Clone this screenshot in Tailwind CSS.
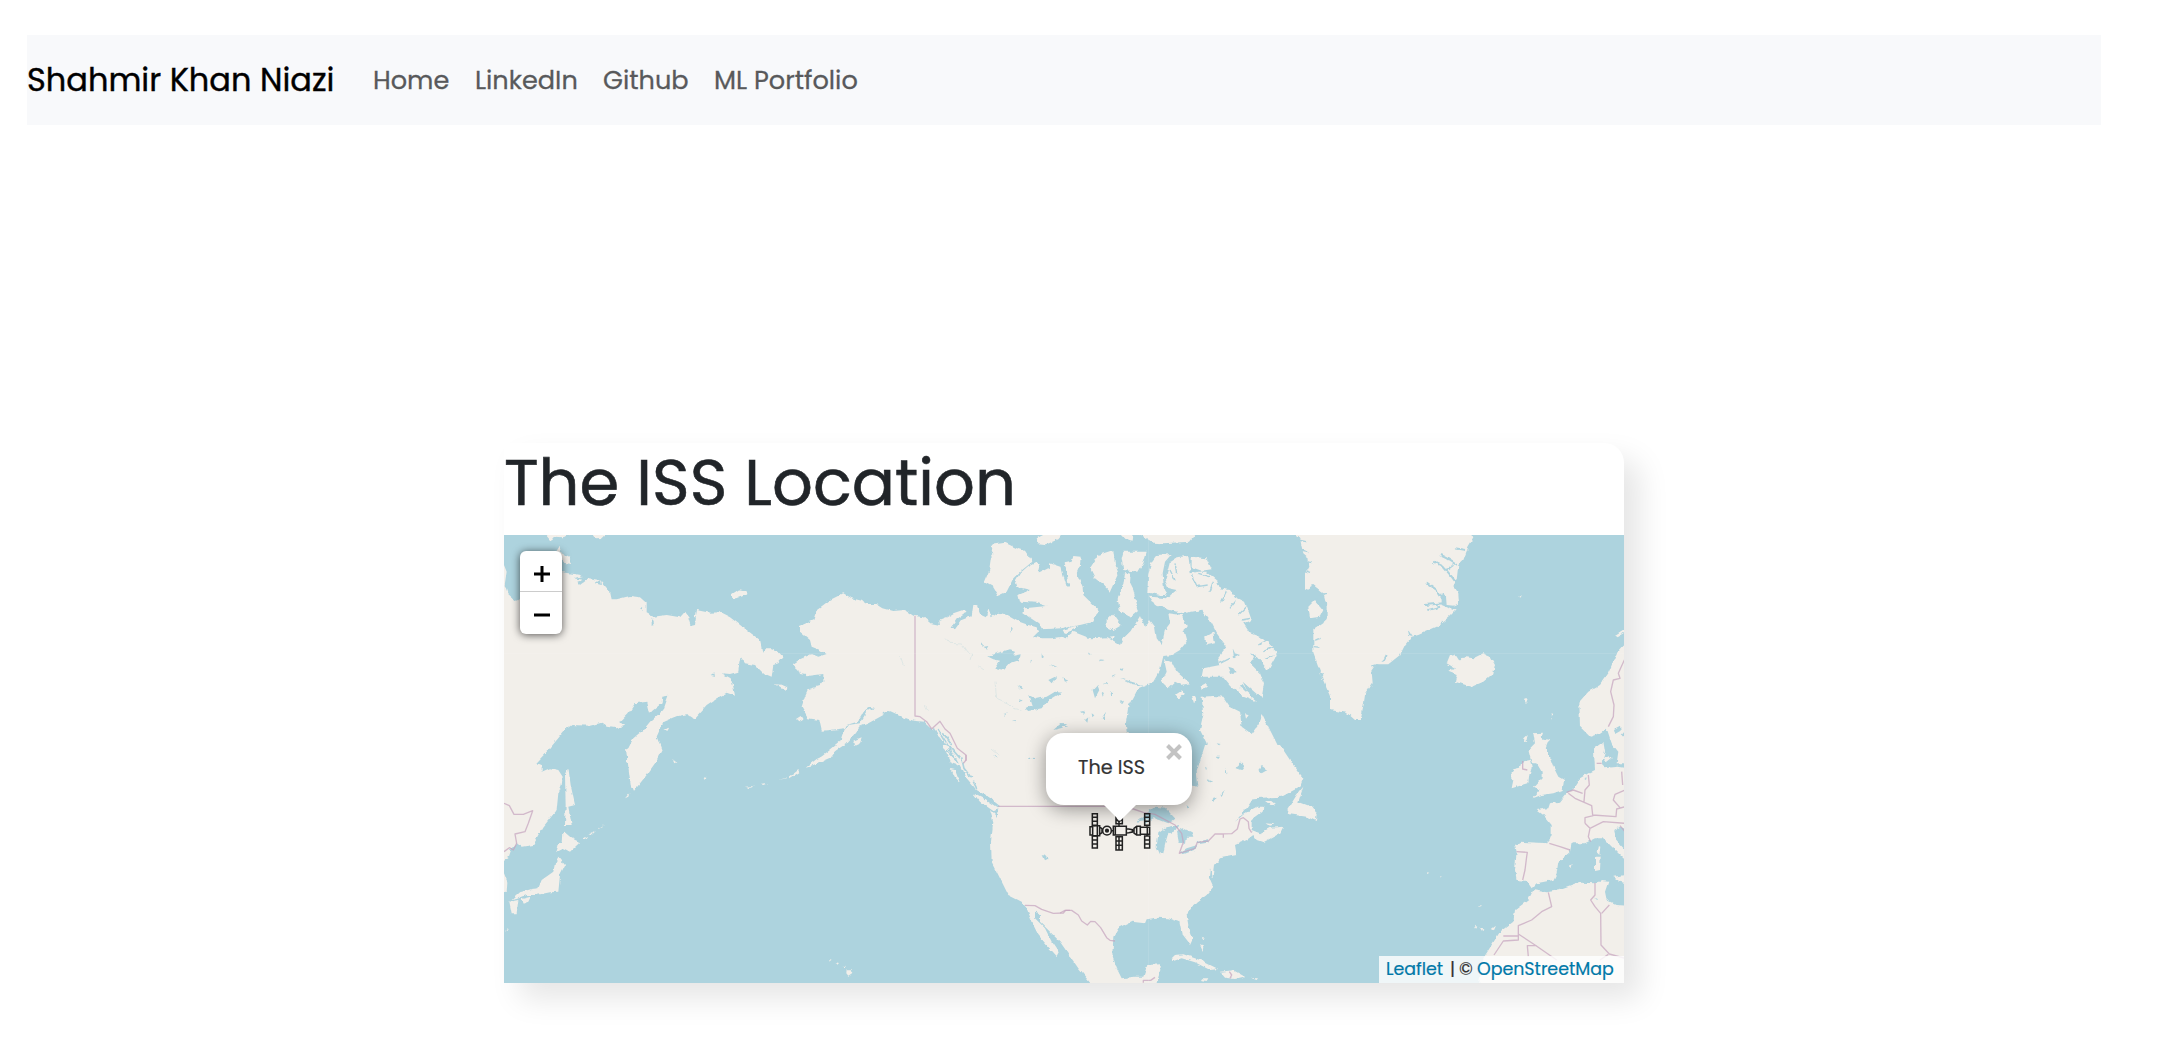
<!DOCTYPE html>
<html lang="en">
<head>
<meta charset="utf-8">
<title>The ISS Location</title>
<script src="https://cdn.jsdelivr.net/npm/@tailwindcss/browser@4"></script>
</head>
<body class="bg-white font-[Poppins,Inter,sans-serif] text-[#212529] pt-[35px] h-[1042px] overflow-hidden">
<nav class="ml-[27px] w-[2074px] h-[90px] bg-[#f8f9fb] flex items-center">
  <a class="w-[346px] text-[32px] leading-none text-black whitespace-nowrap [-webkit-text-stroke:0.4px]">Shahmir Khan Niazi</a>
  <ul class="flex items-center pt-[2px] text-[25.6px] leading-none text-[#58595b] whitespace-nowrap [-webkit-text-stroke:0.3px]">
    <li class="w-[102px]">Home</li>
    <li class="w-[128px]">LinkedIn</li>
    <li class="w-[111px]">Github</li>
    <li>ML Portfolio</li>
  </ul>
</nav>
<main class="mt-[318px] ml-[504px] w-[1120px] h-[540px] rounded-tr-[20px] shadow-[16px_16px_30px_rgba(0,0,0,0.1)]">
  <h1 class="h-[92px] pt-[2px] text-[64px] leading-[76px] whitespace-nowrap [-webkit-text-stroke:0.6px]">The ISS Location</h1>
  <section class="relative w-[1120px] h-[448px] overflow-hidden bg-[#add3de]">
    <svg class="block" width="1120" height="448" viewBox="504 535 1120 448">
      <defs>
        <filter id="coast" x="0" y="0" width="1" height="1" color-interpolation-filters="sRGB"><feTurbulence type="fractalNoise" baseFrequency=".17" numOctaves="2" seed="4" result="n"/><feDisplacementMap in="SourceGraphic" in2="n" scale="4" xChannelSelector="R" yChannelSelector="G"/><feGaussianBlur stdDeviation=".6"/></filter>
      </defs>
      <g filter="url(#coast)">
      <rect x="484" y="515" width="1160" height="488" fill="#add3de"/>
      <g fill="#f2efea">
        <!-- Siberia, Chukotka -->
        <g transform="translate(500 530) scale(.33333)">
          <path d="M-30 100L12 105 20 125 14 165 22 190 35 202 50 212 60 205 62 120 190 127 240 135 262 150 270 145 300 150 330 185 335 208 350 208 390 198 420 202 440 220 440 250 460 260 500 255 540 262 555 245 568 262 580 285 588 240 630 248 660 247 690 262 740 300 780 330 788 372 795 355 815 355 835 365 850 382 835 400 820 405 815 440 790 430 765 405 735 400 722 380 718 400 715 425 690 432 665 430 692 445 700 470 705 497 680 488 650 505 620 525 582 567 560 553 525 560 490 575 470 620 485 660 465 700 380 700 385 655 400 625 430 600 450 575 490 540 505 497 487 500 485 520 450 548 442 515 405 520 385 550 360 575 372 587 350 595 320 590 305 578 270 587 215 585 195 600 150 655 108 700 -30 700Z"/>
          <path d="M695 193L718 178 738 182 746 192 715 203 698 206ZM140 15L158 0 210 15 185 22 165 20 155 32ZM275 10L320 10 305 24 285 25ZM165 70L178 50 185 70 210 85 215 102 190 98ZM824 463L845 465 863 476 845 476ZM490 600L505 592 500 602Z"/>
        </g>
        <!-- Alaska, Yukon, Arctic coast -->
        <g transform="translate(780 530) scale(.33333)">
          <path d="M190 190L215 205 245 212 260 222 290 222 310 235 340 243 375 240 400 257 430 262 455 283 480 288 478 270 500 262 520 250 555 238 562 245 530 268 515 290 525 298 545 270 575 258 580 225 590 225 603 255 618 262 625 235 635 262 655 248 680 255 710 272 745 285 770 292 775 305 760 320 790 325 815 325 845 320 870 335 900 335 900 720 545 720 530 690 500 650 480 620 455 598 430 575 400 572 370 562 330 543 310 555 265 580 240 590 225 610 200 640 170 660 130 690 105 695 150 660 180 635 190 605 205 585 240 580 262 542 285 535 275 530 250 545 232 575 200 585 195 595 150 600 125 602 118 570 85 565 65 530 75 500 85 478 120 468 130 455 130 432 90 437 60 432 55 418 38 403 60 388 95 372 115 380 140 372 120 360 95 350 90 330 60 305 60 288 100 270 110 240 150 210Z"/>
          <path d="M630 45L675 38 710 55 735 62 757 95 720 125 700 145 680 185 655 197 640 172 613 157 628 120 633 85 640 75ZM770 95L780 110 775 130 805 115 835 130 830 112 845 120 860 170 905 165 905 270 845 295 785 298 775 280 730 250 735 235 800 228 770 218 720 215 715 195 750 180 710 170 705 155 720 130 745 108ZM770 25L800 10 850 10 835 28 800 43 775 40ZM220 635L245 625 240 640 222 648ZM48 567L62 558 68 568 55 574ZM-5 372L10 382 0 392ZM0 462L22 472 18 480ZM855 100L890 110 890 170 865 160Z"/>
        </g>
        <!-- Canadian Arctic, Baffin, Quebec, west Greenland -->
        <g transform="translate(1060 530) scale(.33333)">
          <path d="M-30 335L15 325 40 305 90 325 140 322 180 345 190 325 215 300 240 258 255 295 270 270 285 290 290 325 305 345 315 300 330 280 325 250 365 255 380 290 370 300 380 335 360 360 335 375 310 378 300 420 280 455 235 475 205 530 197 580 200 605 215 610 230 720 -30 720Z"/>
          <path d="M305 455L320 425 312 388 335 395 350 425 390 460 365 465 345 455 325 475ZM345 495L365 482 375 488 355 507ZM396 500L408 500 402 520ZM422 468L440 458 440 470 425 480Z"/>
          <path d="M425 500L460 498 490 500 510 530 540 545 545 590 575 612 595 585 608 555 630 600 650 640 675 695 690 720 430 720 440 640 420 600 430 555Z"/>
          <path d="M290 75L335 72 315 95 308 130 312 180 322 195 300 195 262 187 265 130 275 95ZM330 95L350 82 385 78 392 130 415 125 440 125 470 150 480 175 510 180 525 200 555 215 575 270 550 280 570 310 610 325 652 365 645 385 625 420 585 385 570 400 600 430 612 460 605 500 560 480 548 462 540 470 595 517 550 500 510 465 490 440 450 440 425 440 430 415 480 405 475 380 500 350 470 310 455 280 425 240 370 250 330 240 285 225 270 200 320 205 350 180 325 175 315 150 325 115ZM395 80L440 85 455 118 425 122 395 112Z"/>
          <path d="M190 65L260 65 250 100 235 125 190 120 185 85ZM180 180L190 165 195 130 212 130 210 160 220 180 235 240 210 260 180 245 173 210ZM90 115L115 75 160 60 165 100 175 130 150 185 130 165 105 145ZM-30 100L5 112 14 170 28 170 22 130 14 100 35 95 40 78 62 80 60 105 50 130 68 170 70 195 115 240 100 275 60 285 30 290 0 275 -30 290ZM140 270L160 250 185 285 160 300 140 290ZM435 320L460 305 465 340 440 345ZM175 10L218 10 215 32 195 25ZM235 10L410 10 390 35 310 40 280 38ZM8 300L45 288 45 298 15 312ZM148 320L165 318 160 332ZM555 552L566 556 558 566ZM480 315L487 325 477 325Z"/>
          <path d="M708 0L708 15 720 25 725 50 730 70 742 80 745 110 735 130 735 180 760 165 790 190 800 230 800 260 790 280 760 300 760 370 785 440 815 510 840 545 870 545 900 555 900 0ZM745 230L765 210 790 240 780 260 750 265Z"/>
        </g>
        <!-- East Greenland, Iceland, Scandinavia -->
        <g transform="translate(1340 530) scale(.33333)">
          <path d="M-30 0L385 0 400 25 385 50 370 90 355 105 350 150 340 165 355 190 357 220 325 235 350 238 330 258 290 290 235 315 215 320 195 345 180 375 145 403 110 403 95 425 98 460 75 495 70 530 62 570 45 570 20 548 -30 540Z"/>
          <path d="M320 400L330 375 345 372 360 395 365 385 380 382 400 385 430 370 450 378 465 405 460 430 430 455 395 470 345 455 350 435 325 425 345 415ZM900 320L853 345 830 370 805 430 780 465 745 485 718 515 720 590 750 620 775 612 800 595 815 640 835 665 830 700 900 700ZM763 655L790 635 795 665 785 700 765 700ZM580 610L610 608 605 625 627 630 615 660 632 700 575 700 565 660 585 640ZM553 625L563 615 560 632 552 640ZM552 508L564 503 558 520ZM632 552L638 550 634 570ZM535 200L543 196 538 203ZM825 318L853 300 853 308 830 322Z"/>
        </g>
        <!-- Russian Far East, Korea, Japan, Kurils -->
        <g transform="translate(500 755) scale(.33333)">
          <path d="M-30 -30L140 -30 125 0 105 22 125 30 125 50 150 40 175 45 188 65 185 90 175 115 170 165 130 215 100 270 65 275 50 265 35 280 25 310 0 325 -30 325ZM-30 345L12 355 22 380 20 410 -30 415ZM195 60L205 38 212 90 225 150 205 155 215 210 195 210 197 150ZM378 -20L475 -20 465 25 440 60 400 110 392 90ZM190 228L215 250 240 262 210 290 190 280 165 292 170 275 188 262ZM175 305L195 330 180 360 175 410 150 412 110 420 80 420 50 432 35 435 60 412 95 402 115 400 125 375 160 350 165 325ZM28 440L55 435 50 475 35 475ZM65 432L92 425 85 440 68 446ZM375 130L388 115 385 125ZM245 252L262 242 255 252ZM265 240L285 230 275 240ZM290 222L312 210 300 220ZM520 12L532 22 526 25ZM735 95L765 93 750 99ZM780 86L805 84 790 90ZM612 66L622 70 618 76ZM12 530L25 518 20 527ZM835 75L880 62 860 70Z"/>
        </g>
        <!-- West coast of North America, Aleutians, Hawaii -->
        <g transform="translate(780 755) scale(.33333)">
          <path d="M488 -30L515 25 545 35 560 70 590 105 640 135 655 160 650 185 630 165 640 200 633 260 635 320 660 370 685 420 725 440 740 460 760 510 775 540 800 570 830 603 836 592 815 560 795 520 765 490 765 470 785 480 800 510 830 545 870 590 900 620 900 -30ZM580 115L610 130 655 160 640 168 600 140ZM512 42L525 45 540 85 525 70ZM25 68L55 45 58 52 30 70ZM80 35L110 12 125 5 165 -12 150 8 100 30ZM200 643L212 643 217 654 205 662 199 655ZM187 632L201 633 195 639ZM167 622L177 624 172 629ZM147 612L155 614 150 618Z"/>
        </g>
        <!-- Eastern North America, Caribbean -->
        <g transform="translate(1060 755) scale(.33333)">
          <path d="M-60 -30L660 -30 700 30 730 70 720 95 665 125 580 130 560 160 525 200 555 175 590 155 610 155 608 170 575 195 575 225 600 235 630 218 670 215 660 235 610 262 590 255 580 240 560 255 525 270 530 300 480 310 465 330 460 370 450 340 447 365 460 395 440 420 400 450 380 480 385 510 398 550 390 567 365 535 358 500 325 490 290 488 260 493 255 505 215 500 175 520 160 545 157 600 170 640 185 670 225 665 250 665 262 630 303 628 300 650 285 700 120 720 55 640 0 560 -60 500Z"/>
          <path d="M730 95L715 140 755 155 770 175 768 198 740 185 690 178 682 165 710 120ZM615 138L630 138 645 150 632 150ZM335 610L345 600 370 598 420 615 475 642 450 645 405 622 365 610 340 618ZM480 650L520 646 555 665 525 672 495 668ZM422 670L445 670 440 678 425 676ZM573 669L594 670 590 675ZM420 570L430 575 428 588ZM425 545L438 550 430 552ZM620 205L645 208 630 212Z"/>
        </g>
        <!-- Europe, North Africa -->
        <g transform="translate(1340 755) scale(.33333)">
          <path d="M572 -20L620 -20 640 35 655 65 672 75 668 105 640 115 605 120 578 130 600 105 582 95 605 70 605 50 590 25ZM545 20L570 15 575 35 568 60 565 85 515 100 520 75 512 65 520 40 540 35ZM762 -20L785 -20 785 25 790 40 835 35 900 45 900 240 840 215 820 228 825 250 855 285 880 330 850 310 820 280 790 250 765 250 735 265 695 265 690 290 655 320 650 355 640 375 590 385 575 400 560 378 530 375 525 345 530 290 525 270 540 260 625 265 635 240 635 210 610 180 590 165 625 160 630 145 660 140 680 115 700 100 720 70 745 55 765 45ZM900 455L830 450 800 435 795 410 805 380 785 378 765 385 720 383 660 405 620 412 580 405 565 435 525 465 520 500 480 530 455 570 430 610 415 700 900 700ZM820 365L900 355 900 395 840 380ZM765 305L782 305 780 345 765 348ZM774 272L781 275 778 300 770 292ZM685 332L698 328 694 340ZM790 8L808 0 815 10 800 22ZM420 518L430 520 426 528ZM455 522L468 512 462 526ZM405 512L412 515 408 522ZM415 450L427 452 418 455ZM260 352L268 353 262 357ZM298 364L308 366 300 367Z"/>
        </g>
      </g>
      <!-- Lakes and inlets -->
      <g fill="#add3de" stroke="none">
        <g transform="translate(500 530) scale(.33333)"><path d="M222 145L245 138 262 148 240 165 232 155 248 150ZM285 160L300 150 303 165ZM420 238L430 232 428 242ZM565 265L588 262 585 285 572 288ZM455 262L462 280 455 290ZM632 435L640 430 642 438Z"/></g>
        <g transform="translate(780 530) scale(.33333)"><path d="M625 380L650 370 690 358 705 362 700 374 722 370 718 390 690 400 672 420 645 415 660 392 640 388ZM745 495L770 507 800 500 825 485 845 488 800 515 785 535 745 543 735 535 755 525ZM712 468L730 475 722 478ZM820 600L840 583 862 582 845 594ZM605 335L612 345 608 352ZM612 350L625 348 618 360ZM693 290L698 295 694 310ZM785 370L792 378 785 383ZM810 402L830 412 820 410ZM805 450L830 438 815 460ZM850 445L865 452 855 455ZM670 552L680 550 674 557ZM700 572L710 570 706 577ZM718 508L728 510 722 515ZM748 395L755 392 750 400ZM310 545L325 543 330 555 318 558Z"/></g>
        <g transform="translate(1060 530) scale(.33333)"><path d="M98 480L112 465 118 480 105 505ZM128 462L140 458 145 466ZM150 488L160 485 155 498ZM125 488L132 492 128 500ZM182 515L192 512 188 522ZM60 545L74 542 70 552ZM75 570L85 562 82 578ZM95 550L103 556 97 562ZM125 565L138 545 132 570ZM155 440L168 435 160 442ZM180 418L190 415 188 422ZM180 445L215 455 255 468 215 462ZM118 388L135 390 125 393ZM85 365L95 373 90 374ZM0 582L25 590 5 592ZM505 410L520 415 530 430 515 432ZM518 355L525 370 540 375 522 385ZM570 370L585 375 620 415 605 412ZM548 455L600 500 602 508 565 490ZM765 205L798 215 798 235 780 222ZM782 430L792 432 785 445ZM470 640L482 642 476 646ZM405 655L412 660 408 680Z"/></g>
        <g transform="translate(1340 530) scale(.33333)"><path d="M305 190L318 200 320 225 350 228 340 240 305 225ZM822 600L840 590 842 602 825 612ZM845 615L853 605 853 625ZM805 655L820 660 815 680ZM203 295L218 318 208 316Z"/></g>
        <g transform="translate(780 755) scale(.33333)"><path d="M788 300L795 302 803 312 795 316ZM745 8L765 9 765 12 745 12ZM640 0L650 8 645 8Z"/></g>
        <g transform="translate(1060 755) scale(.33333)"><path d="M230 200L265 170 285 155 315 158 345 190 325 205 300 195 280 190 255 207 262 195ZM300 298L290 275 295 235 320 217 355 210 345 228 325 237 315 270 310 295ZM350 225L370 220 395 232 400 245 378 245 375 270 357 262ZM355 295L380 280 412 270 405 285 370 298ZM410 262L445 252 450 262 415 268ZM478 120L495 105 485 122ZM455 132L470 128 462 142ZM530 40L540 22 552 35 545 45ZM595 45L605 32 622 45 605 55ZM495 48L500 40 502 60ZM440 72L460 80 450 82ZM380 150L388 158 382 160ZM345 -30L435 -30 410 50 415 95 390 90ZM465 5L480 5 475 12ZM435 35L445 42 438 45Z"/></g>
        <g transform="translate(1340 755) scale(.33333)"><path d="M733 75L740 70 738 78ZM762 432L772 430 770 434Z"/></g>
      </g>
      <!-- Fjords and rivers -->
      <g fill="none" stroke="#add3de" stroke-width="1.5">
        <path transform="translate(1340 530) scale(.33333)" stroke-width="6" d="M260 158L290 180 310 210M255 225L310 220M262 240L300 230M280 95L310 110 335 140 350 160M300 75L320 85 350 105M345 55L375 60M320 120L340 105M130 395L140 375M95 410L112 405"/>
        <path transform="translate(1060 530) scale(.33333)" stroke-width="4" d="M715 30L738 35M722 60L745 65M730 95L755 98M735 125L750 130M760 170L775 180M775 195L798 190M765 330L785 325M762 350L780 352M345 100L350 130M395 135L410 170 440 165M500 185L485 215M530 210L510 235M560 230L535 255M570 265L545 270M620 330L595 345M640 350L610 365M640 375L615 385M415 130L450 140M330 120L345 150M460 155L450 185M480 400L510 385"/>
        <path transform="translate(780 530) scale(.33333)" stroke-width="5" d="M460 595L475 630 495 665M475 600L500 640 520 680M490 610L515 645M500 660L530 690M510 650L540 685"/>
        <path transform="translate(780 755) scale(.33333)" stroke-width="5" d="M520 0L535 25M545 10L552 40 575 70M590 100L580 80M620 125L658 155"/>
        <path transform="translate(780 530) scale(.33333)" stroke="#d5e2e3" stroke-width="2" d="M495 322L510 340 545 342 560 365 575 375 570 390M645 455L650 505 685 520 700 535 725 540M595 408L612 420M435 525L442 540M630 655L655 675M360 378L370 408"/>
      </g>
      </g>
      <!-- Borders -->
      <g fill="none" stroke="#c4a3bd" stroke-opacity=".7" stroke-width="4" stroke-linejoin="round">
        <path transform="translate(780 530) scale(.33333)" d="M405 257L405 558 420 560 440 575 455 597 480 574 495 597 510 610 532 655 558 675 558 692"/>
        <path transform="translate(780 755) scale(.33333)" d="M558 0L558 15 550 25M655 154L840 154M735 451L765 452 785 463 820 475 850 474 857 466 870 466"/>
        <path transform="translate(1060 755) scale(.33333)" d="M0 154L180 154 220 162 250 172 285 178 345 210 365 235 370 262 358 295 405 280 412 262 445 258 465 237 515 236 532 222 540 192 550 188 565 200 567 220 575 233M0 474L15 466 35 466 55 480 65 498 82 510 92 499 105 500 122 518 140 548 150 556 165 558M250 683L250 676 272 676 285 667M508 650L515 660 510 670M490 236L490 248"/>
        <path transform="translate(500 755) scale(.33333)" d="M12 145L28 152 42 178 70 178 98 167 85 205 75 230 45 237 50 265 40 285 28 278 12 290"/>
        <path transform="translate(1340 530) scale(.33333)" d="M853 390L835 430 840 445 820 450 812 485 822 525 820 560 805 590"/>
        <path transform="translate(1340 755) scale(.33333)" d="M548 18L548 42 562 45M745 60L748 90 735 105 732 140M680 112L700 105 728 115M685 115L705 130 755 152 758 180 828 185 830 162 855 155M735 205L735 188 760 182M735 205L750 220 790 200 855 205M750 220L745 245 752 260M628 265L660 275 690 285M530 290L562 292 560 305 555 345 548 375M855 105L825 118 820 135 840 158M770 25L785 25M845 50L848 90M625 412L635 455 605 470 575 495 535 512 535 555 490 558 462 600M535 537L585 570 650 615M490 543L535 543M565 605L562 572 590 572M765 383L765 420 752 435 765 455 782 475 783 570 808 597 855 610M785 475L808 450M780 615L805 598M855 230L840 212"/>
      </g>
      <g fill="none" stroke="#fff" stroke-opacity=".1"><path d="M504 653.500H1624M1148.500 535V983"/></g>
      <!-- Space station marker -->
      <g transform="translate(1030 720) scale(.33333)" fill="none" stroke="#222" stroke-width="4.600">
        <path d="M187 281H202V316H187ZM187 348H202V384H187ZM344 281H359V316H344ZM344 348H359V384H344ZM258 350H277V390H258ZM258 288V311H277V288M258 296L267 306 277 296M187 292H202M187 304H202M187 360H202M187 372H202M344 292H359M344 304H359M344 360H359M344 372H359M258 363H277M258 376H277M267 350V390M267 306V319M194 316V319M194 345V348M351 316V320M351 344V348"/>
        <path d="M180 320H188V345H180ZM188 317H209V347H188ZM209 321L216 326V338L209 343M202 318V346M250 319H289V345H250ZM256 319V345M289 326L296 327 307 329V336L296 338 289 339M244 332H250M307 332H312M312 325L320 319H331V345H320L312 339ZM331 322H359V343H331M352 322V343M320 319V345"/>
        <circle cx="231" cy="332" r="13"/><circle cx="231" cy="332" r="4" fill="#222"/>
      </g>
    </svg>
    <div class="absolute left-[16px] top-[16px] w-[42px] h-[83px] rounded-[6px] bg-white shadow-[0_1px_8px_rgba(0,0,0,0.65)] flex flex-col">
      <button class="h-[41px] border-b border-[#ccc] flex items-center justify-center pt-[6px] pl-[1px]" aria-label="Zoom in"><svg width="16" height="16" viewBox="0 0 16 16"><path d="M0 8H16M8 0V16" stroke="#000" stroke-width="3"/></svg></button>
      <button class="h-[42px] flex items-center justify-center pt-[4px] pl-[1px]" aria-label="Zoom out"><svg width="16" height="16" viewBox="0 0 16 16"><path d="M0 8H16" stroke="#000" stroke-width="3"/></svg></button>
    </div>
    <div class="absolute left-[542px] top-[198px] w-[146px] h-[72px] rounded-[18px] bg-white shadow-[0_4px_19px_rgba(0,0,0,0.4)]">
      <p class="pl-[32px] pt-[23px] text-[19.2px] leading-[24px] text-[#333] whitespace-nowrap [-webkit-text-stroke:0.2px]">The ISS</p>
      <svg class="absolute left-[120px] top-[11px]" width="16" height="16" viewBox="0 0 16 16"><path d="M1.500 1.500L14.500 14.500M14.500 1.500L1.500 14.500" stroke="#c3c3c3" stroke-width="4"/></svg>
      <svg class="absolute left-[57px] top-[71px]" width="34" height="19" viewBox="0 0 34 19"><path d="M0 0H34L18 16Q17 17 16 16Z" fill="#fff"/></svg>
    </div>
    <div class="absolute right-0 bottom-0 w-[245px] h-[27px] bg-white/80 flex items-center text-[17.4px] leading-none text-[#333] whitespace-nowrap pl-[7px] [-webkit-text-stroke:0.2px]">
      <a class="w-[64px] text-[#0078a8]">Leaflet</a><span class="w-[9px]">|</span><span class="w-[18px]">©</span><a class="text-[#0078a8]">OpenStreetMap</a>
    </div>
  </section>
</main>
</body>
</html>
